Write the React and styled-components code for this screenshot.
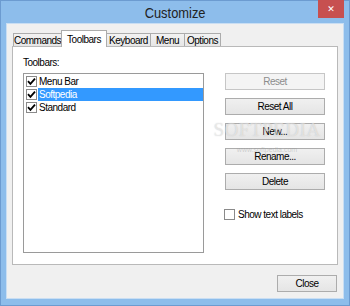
import React from 'react'
import styled, { createGlobalStyle } from 'styled-components'

const GlobalStyle = createGlobalStyle`
  html, body {
    margin: 0;
    padding: 0;
    width: 350px;
    height: 306px;
    overflow: hidden;
  }
`

const tabs = [
  { label: 'Commands', w: 49 },
  { label: 'Toolbars', w: 46, active: true },
  { label: 'Keyboard', w: 45 },
  { label: 'Menu', w: 35 },
  { label: 'Options', w: 37 },
]

const toolbars = [
  { label: 'Menu Bar' },
  { label: 'Softpedia', selected: true },
  { label: 'Standard' },
]

const buttons = [
  { label: 'Reset', disabled: true },
  { label: 'Reset All' },
  { label: 'New...' },
  { label: 'Rename...' },
  { label: 'Delete' },
]

const Check = () => (
  <svg width="9" height="9" viewBox="0 0 9 9">
    <path d="M1 4.2 L3.4 6.8 L8 1.6" fill="none" stroke="#000" strokeWidth="1.8" />
  </svg>
)

const App = () => {
  return (
    <Window>
      <GlobalStyle />
      <TitleBar>
        <span />
        <Title>Customize</Title>
        <CloseX>✕</CloseX>
      </TitleBar>
      <Body>
        <TabStrip>
          {tabs.map((t) => (
            <Tab key={t.label} $w={t.w} $active={t.active}>{t.label}</Tab>
          ))}
        </TabStrip>
        <Panel>
          <LeftCol>
            <Label>Toolbars:</Label>
            <ListBox>
              {toolbars.map((t) => (
                <Row key={t.label}>
                  <Box><Check /></Box>
                  <RowText $selected={t.selected}>{t.label}</RowText>
                </Row>
              ))}
            </ListBox>
          </LeftCol>
          <RightCol>
            {buttons.map((b) => (
              <Button key={b.label} disabled={b.disabled}>{b.label}</Button>
            ))}
            <CheckRow>
              <Box $size={11} />
              <span>Show text labels</span>
            </CheckRow>
          </RightCol>
        </Panel>
        <Footer>
          <Button $w={60}>Close</Button>
        </Footer>
      </Body>
      <Watermark>
        <Big>SOFTPEDIA</Big>
        <Small>www.softpedia.com</Small>
      </Watermark>
    </Window>
  )
}

const font = `"Liberation Sans", Arial, sans-serif`

const Window = styled.div`
  position: relative;
  width: 350px;
  height: 306px;
  box-sizing: border-box;
  background: #8dbdeb;
  box-shadow: inset 0 0 0 1px #6c9bd0;
  display: flex;
  flex-direction: column;
  font-family: ${font};
  font-size: 10px;
  letter-spacing: -0.5px;
  color: #000;
`

const TitleBar = styled.div`
  height: 24px;
  display: grid;
  grid-template-columns: 1fr auto 1fr;
  align-items: start;
`

const Title = styled.div`
  font-family: "Liberation Sans", sans-serif;
  font-size: 14px;
  line-height: 14px;
  letter-spacing: 0;
  margin-top: 6px;
  color: #222;
  transform: scaleX(0.92);
`

const CloseX = styled.div`
  justify-self: end;
  width: 26px;
  height: 18px;
  margin-right: 6px;
  background: #c75050;
  color: #fff;
  font-family: "DejaVu Sans", sans-serif;
  font-size: 9px;
  font-weight: bold;
  letter-spacing: 0;
  display: flex;
  align-items: center;
  justify-content: center;
`

const Body = styled.div`
  flex: 1;
  margin: 0 7px 8px 7px;
  background: #f0f0f0;
  box-shadow: 0 0 0 1px #c9def3;
  padding: 6px 5px 0 5px;
  display: flex;
  flex-direction: column;
`

const TabStrip = styled.div`
  height: 16px;
  display: flex;
  align-items: flex-end;
  padding-left: 2px;
`

const Tab = styled.div`
  box-sizing: border-box;
  width: ${(p) => p.$w}px;
  height: ${(p) => (p.$active ? 17 : 13)}px;
  margin-bottom: ${(p) => (p.$active ? -1 : 0)}px;
  margin-left: -1px;
  border: 1px solid #acacac;
  border-bottom: none;
  background: ${(p) => (p.$active ? '#fff' : 'linear-gradient(#f2f2f2, #e6e6e6)')};
  position: relative;
  z-index: ${(p) => (p.$active ? 2 : 1)};
  display: flex;
  align-items: center;
  justify-content: center;
  white-space: nowrap;
  padding-top: ${(p) => (p.$active ? 0 : 1)}px;
`

const Panel = styled.div`
  box-sizing: border-box;
  height: 219px;
  background: #fff;
  border: 1px solid #b9b9b9;
  padding: 9px 10px 11px 10px;
  display: flex;
  gap: 21px;
`

const LeftCol = styled.div`
  width: 181px;
  display: flex;
  flex-direction: column;
`

const Label = styled.div`
  height: 17px;
  line-height: 13px;
`

const ListBox = styled.div`
  flex: 1;
  box-sizing: border-box;
  border: 1px solid #9a9a9a;
  padding-top: 1px;
`

const Row = styled.div`
  height: 13px;
  display: flex;
  align-items: center;
  padding-left: 2px;
`

const Box = styled.div`
  box-sizing: border-box;
  width: ${(p) => p.$size || 11}px;
  height: ${(p) => p.$size || 11}px;
  border: 1px solid #8a8a8a;
  background: #fff;
  display: flex;
  align-items: center;
  justify-content: center;
  flex: none;
`

const RowText = styled.div`
  flex: 1;
  height: 13px;
  line-height: 13px;
  margin-left: 1px;
  padding-left: 1px;
  background: ${(p) => (p.$selected ? '#3399ff' : 'transparent')};
  color: ${(p) => (p.$selected ? '#fff' : '#000')};
`

const RightCol = styled.div`
  padding-top: 17px;
  display: flex;
  flex-direction: column;
  gap: 8px;
`

const Button = styled.button`
  box-sizing: border-box;
  width: ${(p) => p.$w || 100}px;
  height: 17px;
  padding: 0;
  border: 1px solid ${(p) => (p.disabled ? '#c6c6c6' : '#acacac')};
  background: ${(p) => (p.disabled ? '#f4f4f4' : 'linear-gradient(#f0f0f0, #e5e5e5)')};
  color: ${(p) => (p.disabled ? '#8c8c8c' : '#000')};
  font-family: ${font};
  font-size: 10px;
  letter-spacing: -0.5px;
  line-height: 15px;
`

const CheckRow = styled.div`
  margin-top: 11px;
  display: flex;
  align-items: center;
  gap: 3px;
  margin-left: -1px;
`

const Footer = styled.div`
  display: flex;
  justify-content: flex-end;
  padding: 10px 1px 0 0;
`

const Watermark = styled.div`
  position: absolute;
  left: 218px;
  top: 121px;
  width: 98px;
  display: flex;
  flex-direction: column;
  align-items: center;
  pointer-events: none;
  letter-spacing: 0;
  color: rgba(255, 255, 255, 0.5);
  text-shadow: 0 0 1px rgba(120, 120, 120, 0.4);
`

const Big = styled.div`
  font-family: "Liberation Serif", serif;
  font-size: 19px;
  line-height: 18px;
  letter-spacing: 0.5px;
`

const Small = styled.div`
  margin-top: 7px;
  font-family: "Liberation Sans", sans-serif;
  font-size: 7px;
  color: rgba(150, 150, 150, 0.4);
  text-shadow: none;
`

export default App
